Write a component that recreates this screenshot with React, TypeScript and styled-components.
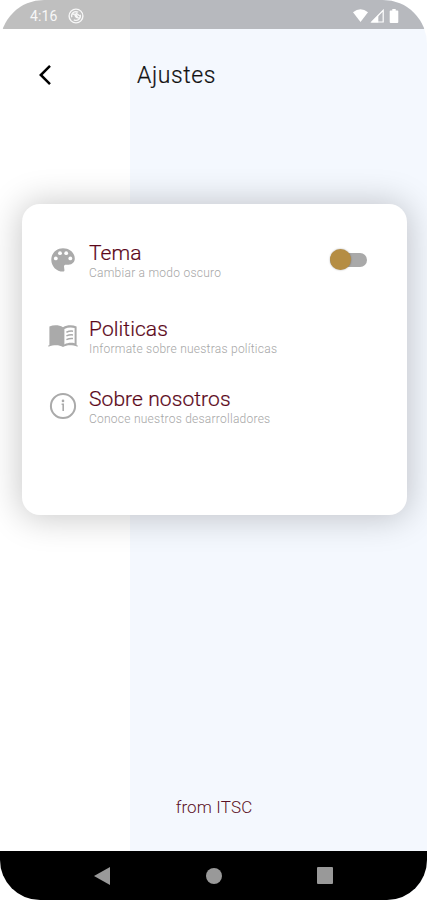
import React, { useState } from "react";
import styled, { createGlobalStyle } from "styled-components";

const GlobalStyle = createGlobalStyle`
  * { box-sizing: border-box; }
  body { margin: 0; background: #fff; font-family: Roboto, "Liberation Sans", sans-serif; }
`;

const Phone = styled.div`
  width: 427px;
  height: 900px;
  display: flex;
  flex-direction: column;
  overflow: hidden;
  border-radius: 44px 44px 40px 40px;
  background: linear-gradient(to right, #fff 130px, #f4f8fe 130px);
`;

const StatusBar = styled.header`
  height: 29px;
  flex: none;
  display: flex;
  align-items: center;
  justify-content: space-between;
  padding: 3px 26px 0 30px;
  color: #f7f7f7;
  background: linear-gradient(to right, #bfbfbf 130px, #b7b9be 130px);
`;

const StatusGroup = styled.div<{ $gap: number }>`
  display: flex;
  align-items: center;
  gap: ${(p) => p.$gap}px;
  svg { display: block; }
`;

const Clock = styled.time`
  font-size: 14px;
  line-height: 16px;
  letter-spacing: 0.1px;
`;

const TitleBar = styled.div`
  height: 92px;
  flex: none;
  display: flex;
  align-items: center;
  padding-left: 36px;
`;

const BackButton = styled.button`
  width: 101px;
  padding: 0;
  border: 0;
  background: none;
  svg { display: block; }
`;

const Title = styled.h1`
  margin: 0;
  padding-top: 2px;
  font-size: 23px;
  font-weight: 300;
  line-height: 28px;
  letter-spacing: 0.6px;
  color: #111;
  -webkit-text-stroke: 0.2px #111;
`;

const Card = styled.main`
  height: 311px;
  flex: none;
  margin: 82.5px 20px 0 22px;
  padding: 36px 40px 0 26px;
  border-radius: 18px;
  background: #fff;
  box-shadow: 0 1px 34px 2px rgba(0, 0, 0, 0.22);
`;

const Row = styled.div<{ $height: number }>`
  height: ${(p) => p.$height}px;
  display: flex;
  align-items: flex-start;
`;

const IconBox = styled.div`
  width: 30px;
  height: 41px;
  margin-right: 11px;
  display: flex;
  align-items: center;
  justify-content: center;
`;

const Labels = styled.div`
  flex: 1;
  white-space: nowrap;
`;

const Label = styled.div`
  font-size: 21px;
  font-weight: 300;
  line-height: 26px;
  letter-spacing: 0.08px;
  color: #5b0719;
  -webkit-text-stroke: 0.2px #5b0719;
`;

const Hint = styled.div`
  font-size: 12px;
  font-weight: 300;
  line-height: 14px;
  letter-spacing: 0.25px;
  color: #a6a6a6;
`;

const Switch = styled.button<{ $on: boolean }>`
  width: 37px;
  height: 14px;
  margin-top: 13px;
  padding: 0;
  border: 0;
  border-radius: 7px;
  display: flex;
  align-items: center;
  justify-content: ${(p) => (p.$on ? "flex-end" : "flex-start")};
  background: #a9a9a9;
`;

const Thumb = styled.span`
  width: 21px;
  height: 21px;
  flex: none;
  border-radius: 50%;
  background: #b58d43;
  box-shadow: 0 0 2px rgba(0, 0, 0, 0.35);
`;

const Credit = styled.footer`
  flex: 1;
  display: flex;
  align-items: flex-end;
  justify-content: center;
  padding: 0 0 33px 1px;
  font-size: 17px;
  font-weight: 300;
  line-height: 22px;
  letter-spacing: 0.15px;
  color: #5b1025;
`;

const NavBar = styled.nav`
  height: 49px;
  flex: none;
  display: flex;
  align-items: center;
  justify-content: space-between;
  padding: 0 94px;
  background: #000;
  svg { display: block; }
`;

const PaletteIcon = () => (
  <svg width="28" height="28" viewBox="0 0 28 28">
    <path d="M14 2.2C7.3 2.2 2.3 7.2 2.3 13.7C2.3 20.2 7.4 25.6 14 25.6C15.2 25.6 15.6 24.7 15.4 23.7L15 20.6C14.9 19.4 15.6 18.7 16.8 18.7H19.5C23.4 18.7 25.8 16 25.8 12.6C25.8 6.6 20.6 2.2 14 2.2Z" fill="#aaa" />
    <g fill="#fff">
      <circle cx="6.8" cy="12.4" r="1.9" />
      <circle cx="11" cy="7.2" r="1.9" />
      <circle cx="17.2" cy="7.2" r="1.9" />
      <circle cx="21.3" cy="12.4" r="1.9" />
    </g>
  </svg>
);

const BookIcon = () => (
  <svg width="30" height="30" viewBox="0 0 30 30">
    <path d="M1.4 5.6C6 3.6 11 4 15 6.2C19 4 24 3.6 28.6 5.6V24.2H29.6V25.8C24 23.8 19 23.8 15 26C11 23.8 6 23.8 0.4 25.8V24.2H1.4Z" fill="#aaa" />
    <path d="M16.4 7.9C19.8 6.3 23.4 6 26.6 7V22.3C23.2 21.5 19.6 21.8 16.4 23.4Z" fill="#fff" />
    <path d="M18.4 11.2Q21.6 9.8 25 10.2M18.4 14.9Q21.6 13.5 25 13.9M18.4 18.6Q21.6 17.2 25 17.6" fill="none" stroke="#aaa" strokeWidth="1.5" />
  </svg>
);

const InfoIcon = () => (
  <svg width="28" height="28" viewBox="0 0 28 28" fill="none" stroke="#aaa">
    <circle cx="14" cy="14" r="12.1" strokeWidth="2" />
    <path d="M12.6 12.2H14.2V19" strokeWidth="1.6" />
    <circle cx="14" cy="8.9" r="1.3" fill="#aaa" stroke="none" />
  </svg>
);

export default function App() {
  const [dark, setDark] = useState(false);
  return (
    <>
      <GlobalStyle />
      <Phone>
        <StatusBar>
          <StatusGroup $gap={11}>
            <Clock>4:16</Clock>
            <svg width="16" height="16" viewBox="0 0 16 16" fill="none" stroke="#f7f7f7">
              <circle cx="8" cy="8" r="6.9" strokeWidth="1.4" />
              <path d="M3.8 9.2A4.3 4.3 0 0 1 10.2 4.3M12.2 6.8A4.3 4.3 0 0 1 5.8 11.7M4.6 6.4Q8 5.2 9.4 9M6.8 7Q8.4 10.8 11.4 9.6M7.6 4.8L11.8 8" strokeWidth="1.3" />
            </svg>
          </StatusGroup>
          <StatusGroup $gap={2}>
            <svg width="15" height="14" viewBox="0 0 15 14"><path d="M0 3.3Q7.5-2.6 15 3.3L7.5 13Z" fill="#fff" /></svg>
            <svg width="15" height="14" viewBox="0 0 15 14"><path d="M1.8 13H13.2V1.3Z" fill="none" stroke="#fff" strokeWidth="1.2" /><path d="M1 13.5L8.3 6V13.5Z" fill="#fff" /></svg>
            <svg width="14" height="14" viewBox="0 0 14 14"><path d="M5.3 0H8.7V1.4H10.5Q11.3 1.4 11.3 2.2V13Q11.3 14 10.3 14H3.7Q2.7 14 2.7 13V2.2Q2.7 1.4 3.5 1.4H5.3Z" fill="#fff" /></svg>
          </StatusGroup>
        </StatusBar>
        <TitleBar>
          <BackButton aria-label="Atrás">
            <svg width="18" height="22" viewBox="0 0 18 22" fill="none" stroke="#000" strokeWidth="2.5">
              <path d="M14 1.8L4.8 11L14 20.2" />
            </svg>
          </BackButton>
          <Title>Ajustes</Title>
        </TitleBar>
        <Card>
          <Row $height={76}>
            <IconBox><PaletteIcon /></IconBox>
            <Labels>
              <Label>Tema</Label>
              <Hint>Cambiar a modo oscuro</Hint>
            </Labels>
            <Switch $on={dark} role="switch" aria-checked={dark} aria-label="Tema" onClick={() => setDark(!dark)}>
              <Thumb />
            </Switch>
          </Row>
          <Row $height={70}>
            <IconBox><BookIcon /></IconBox>
            <Labels>
              <Label>Politicas</Label>
              <Hint>Informate sobre nuestras políticas</Hint>
            </Labels>
          </Row>
          <Row $height={70}>
            <IconBox><InfoIcon /></IconBox>
            <Labels>
              <Label>Sobre nosotros</Label>
              <Hint>Conoce nuestros desarrolladores</Hint>
            </Labels>
          </Row>
        </Card>
        <Credit>from ITSC</Credit>
        <NavBar>
          <svg width="16" height="18" viewBox="0 0 16 18"><path d="M0 9L16 0V18Z" fill="#999" /></svg>
          <svg width="16" height="16" viewBox="0 0 16 16"><circle cx="8" cy="8" r="8" fill="#999" /></svg>
          <svg width="16" height="17" viewBox="0 0 16 17"><rect width="16" height="17" rx="1" fill="#999" /></svg>
        </NavBar>
      </Phone>
    </>
  );
}
